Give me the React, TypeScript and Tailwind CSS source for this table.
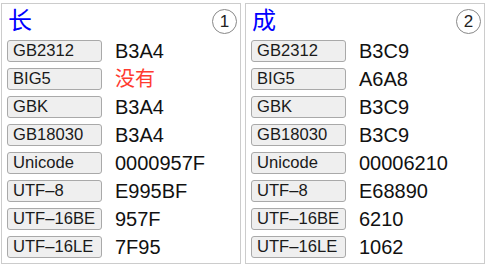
import React from "react";

type Row = { label: string; value: string; missing?: boolean };

const cards: { char: string; n: number; rows: Row[] }[] = [
  {
    char: "长",
    n: 1,
    rows: [
      { label: "GB2312", value: "B3A4" },
      { label: "BIG5", value: "没有", missing: true },
      { label: "GBK", value: "B3A4" },
      { label: "GB18030", value: "B3A4" },
      { label: "Unicode", value: "0000957F" },
      { label: "UTF–8", value: "E995BF" },
      { label: "UTF–16BE", value: "957F" },
      { label: "UTF–16LE", value: "7F95" },
    ],
  },
  {
    char: "成",
    n: 2,
    rows: [
      { label: "GB2312", value: "B3C9" },
      { label: "BIG5", value: "A6A8" },
      { label: "GBK", value: "B3C9" },
      { label: "GB18030", value: "B3C9" },
      { label: "Unicode", value: "00006210" },
      { label: "UTF–8", value: "E68890" },
      { label: "UTF–16BE", value: "6210" },
      { label: "UTF–16LE", value: "1062" },
    ],
  },
];

const CharCard = ({ char, n, rows }: (typeof cards)[number]) => (
  <div className="w-[240px] h-[261px] border border-[#cccccc] bg-white pl-[5px] pr-[3px]">
    <div className="flex justify-between h-[36px]">
      <span className="text-[24px] leading-[30px] text-[#0000ff] pl-[1px] pt-[2px]">{char}</span>
      <span className="mt-[5px] w-[25px] h-[25px] rounded-full border border-[#888888] flex items-center justify-center text-[17px] text-[#222222]">
        {n}
      </span>
    </div>
    <div className="flex flex-col gap-[6px]">
      {rows.map((r) => (
        <div key={r.label} className="flex items-center h-[22px]">
          <div className="w-[95px] h-[22px] border border-[#a9a9a9] rounded-[3px] bg-[#efefef] pl-[5px] text-[16.6px] leading-[20px] text-[#1a1a1a]">
            {r.label}
          </div>
          <span
            className={
              "ml-[13px] text-[20px] leading-[22px] " +
              (r.missing ? "text-[#ff3b30]" : "text-[#111111]")
            }
          >
            {r.value}
          </span>
        </div>
      ))}
    </div>
  </div>
);

export default function App() {
  return (
    <div
      className="flex gap-[4px] pl-[1px] pt-[3px] bg-white w-[489px] h-[270px]"
      style={{ fontFamily: '"Liberation Sans", "Noto Sans CJK SC", sans-serif' }}
    >
      {cards.map((c) => (
        <CharCard key={c.n} {...c} />
      ))}
    </div>
  );
}
